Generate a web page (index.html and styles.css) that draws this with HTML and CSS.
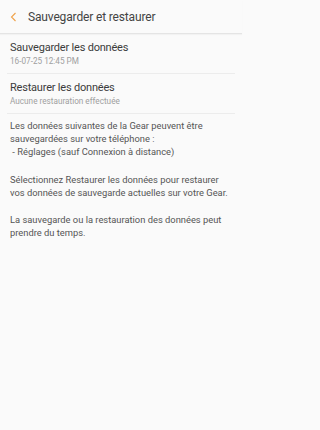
FILE: index.html
```html
<!DOCTYPE html>
<html lang="fr">
<head>
<meta charset="utf-8">
<link rel="stylesheet" href="styles.css">
</head>
<body>
<div class="app">
  <header class="header">
    <svg class="back" width="7" height="10" viewBox="0 0 7 10"><path d="M5.5 1 L1.5 5 L5.5 9" fill="none" stroke="#f0a24a" stroke-width="1.1"/></svg>
    <span class="title">Sauvegarder et restaurer</span>
  </header>
  <div class="item">
    <div class="item-title">Sauvegarder les données</div>
    <div class="item-sub">16-07-25 12:45 PM</div>
  </div>
  <div class="item">
    <div class="item-title">Restaurer les données</div>
    <div class="item-sub">Aucune restauration effectuée</div>
  </div>
  <div class="desc">
    <p>Les données suivantes de la Gear peuvent être sauvegardées sur votre téléphone :<br>&nbsp;- Réglages (sauf Connexion à distance)</p>
    <p>Sélectionnez Restaurer les données pour restaurer vos données de sauvegarde actuelles sur votre Gear.</p>
    <p>La sauvegarde ou la restauration des données peut prendre du temps.</p>
  </div>
</div>
</body>
</html>
```
FILE: styles.css
```css
html, body { margin: 0; padding: 0; }
body { background: #fafafa; font-family: Roboto, "Noto Sans", sans-serif; color: #3a3a3a; }
.app { width: 242px; min-height: 430px; }
.header { height: 33px; display: flex; align-items: center; border-bottom: 1px solid #e4e4e4; box-shadow: 0 1px 1px rgba(0,0,0,0.03); }
.back { margin-left: 10px; margin-right: 11px; }
.title { font-size: 12px; letter-spacing: -0.15px; color: #444; }
.item { margin: 0 7px; padding: 7px 3px 0; height: 32px; border-bottom: 1px solid #ececec; }
.item-title { font-size: 11px; letter-spacing: -0.2px; line-height: 14px; color: #3c3c3c; }
.item-sub { font-size: 8.2px; line-height: 12px; color: #a0a0a0; }
.desc { padding: 5px 8px 0 10px; font-size: 9.35px; line-height: 13.2px; color: #555; }
.desc p { margin: 0 0 14px; }
```
